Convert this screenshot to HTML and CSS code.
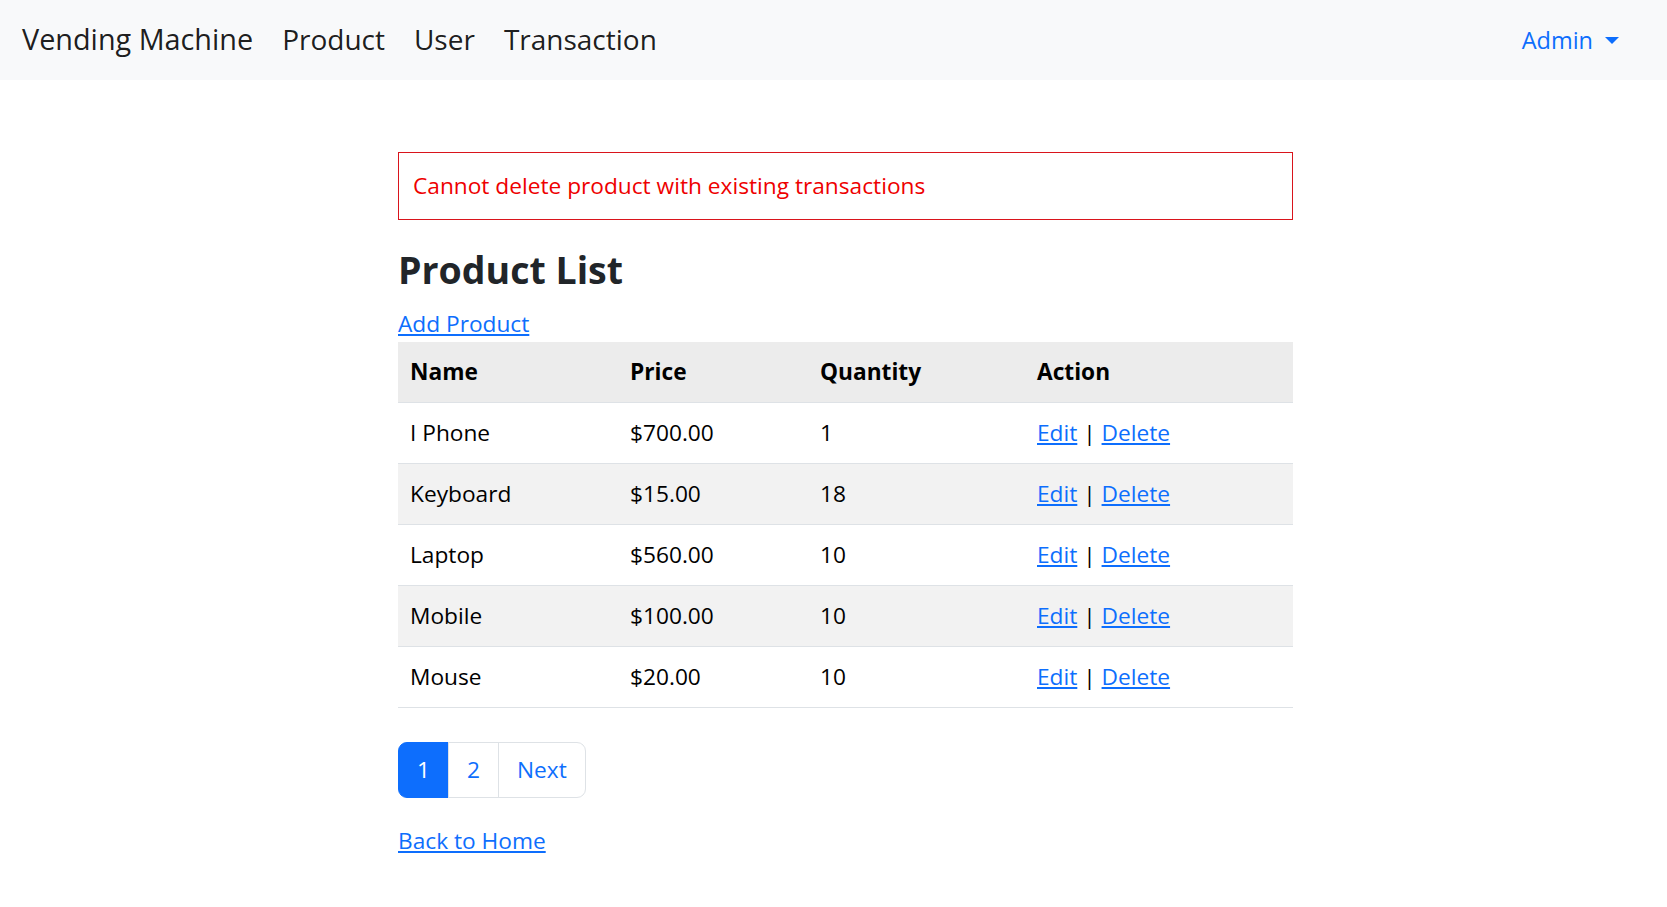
FILE: index.html
```html
<!DOCTYPE html>
<html lang="en">
<head>
<meta charset="utf-8">
<title>Product List</title>
<link rel="stylesheet" href="styles.css">
</head>
<body>
<nav class="navbar">
  <div class="nav-left">
    <a class="brand" href="#">Vending Machine</a>
    <a class="nav-link" href="#">Product</a>
    <a class="nav-link" href="#">User</a>
    <a class="nav-link" href="#">Transaction</a>
  </div>
  <a class="admin" href="#">Admin <span class="caret"></span></a>
</nav>
<main class="content">
  <div class="alert">Cannot delete product with existing transactions</div>
  <h2 class="title">Product List</h2>
  <a class="link add-link" href="#">Add Product</a>
  <table class="table">
    <colgroup>
      <col class="c-name"><col class="c-price"><col class="c-qty"><col class="c-act">
    </colgroup>
    <thead>
      <tr><th>Name</th><th>Price</th><th>Quantity</th><th>Action</th></tr>
    </thead>
    <tbody>
      <tr><td>I Phone</td><td>$700.00</td><td>1</td><td><a class="link" href="#">Edit</a> | <a class="link" href="#">Delete</a></td></tr>
      <tr class="odd"><td>Keyboard</td><td>$15.00</td><td>18</td><td><a class="link" href="#">Edit</a> | <a class="link" href="#">Delete</a></td></tr>
      <tr><td>Laptop</td><td>$560.00</td><td>10</td><td><a class="link" href="#">Edit</a> | <a class="link" href="#">Delete</a></td></tr>
      <tr class="odd"><td>Mobile</td><td>$100.00</td><td>10</td><td><a class="link" href="#">Edit</a> | <a class="link" href="#">Delete</a></td></tr>
      <tr><td>Mouse</td><td>$20.00</td><td>10</td><td><a class="link" href="#">Edit</a> | <a class="link" href="#">Delete</a></td></tr>
    </tbody>
  </table>
  <ul class="pagination">
    <li class="page active"><a href="#">1</a></li>
    <li class="page"><a href="#">2</a></li>
    <li class="page"><a href="#">Next</a></li>
  </ul>
  <a class="link back-link" href="#">Back to Home</a>
</main>
</body>
</html>
```
FILE: styles.css
```css
html, body {
  margin: 0;
  padding: 0;
}
body {
  font-family: "Open Sans", "Noto Sans", sans-serif;
  font-size: 22.7px;
  line-height: 36px;
  color: #212529;
  background: #fff;
}
a { text-decoration: none; }

.navbar {
  height: 80px;
  background: #f8f9fa;
  display: flex;
  align-items: center;
  justify-content: space-between;
  padding: 0 48px 0 22px;
}
.nav-left {
  display: flex;
  align-items: center;
  gap: 29px;
}
.brand,
.nav-link {
  font-size: 28px;
  line-height: 40px;
  color: rgba(0,0,0,.9);
  margin-top: -2px;
}
.brand {
  font-size: 28.8px;
}
.admin {
  font-size: 23.5px;
  color: #0d6efd;
  display: flex;
  align-items: center;
}
.caret {
  display: inline-block;
  width: 0;
  height: 0;
  margin-left: 12px;
  border-top: 7px solid #0d6efd;
  border-left: 7px solid transparent;
  border-right: 7px solid transparent;
}

.content {
  width: 895px;
  margin: 72px 0 0 398px;
}
.alert {
  border: 1px solid #d9141c;
  color: #e00;
  padding: 15px 14px;
  margin-bottom: 22px;
}
.title {
  font-size: 37.5px;
  font-weight: 700;
  line-height: 56px;
  margin: 0 0 8px;
  color: #212529;
}
.link {
  color: #0d6efd;
  text-decoration: underline;
}
.add-link {
  display: inline-block;
}

.table {
  width: 100%;
  border-collapse: collapse;
  color: #000;
}
.c-name { width: 220px; }
.c-price { width: 190px; }
.c-qty { width: 217px; }
.c-act { width: 268px; }
.table th, .table td {
  text-align: left;
  padding: 12px;
  border-bottom: 1px solid #dee2e6;
  line-height: 36px;
}
.table th { font-weight: 700; }
.table thead tr { background: #ececec; }
.table tr.odd { background: #f2f2f2; }

.pagination {
  list-style: none;
  display: flex;
  margin: 34px 0 25px;
  padding: 0;
}
.page a {
  display: block;
  padding: 9px 18px;
  border: 1px solid #dee2e6;
  margin-left: -1px;
  color: #0d6efd;
  line-height: 36px;
}
.page:first-child a {
  margin-left: 0;
  border-radius: 9px 0 0 9px;
}
.page:last-child a {
  border-radius: 0 9px 9px 0;
}
.page.active a {
  background: #0d6efd;
  border-color: #0d6efd;
  color: #fff;
}
.back-link { display: inline-block; }
```
